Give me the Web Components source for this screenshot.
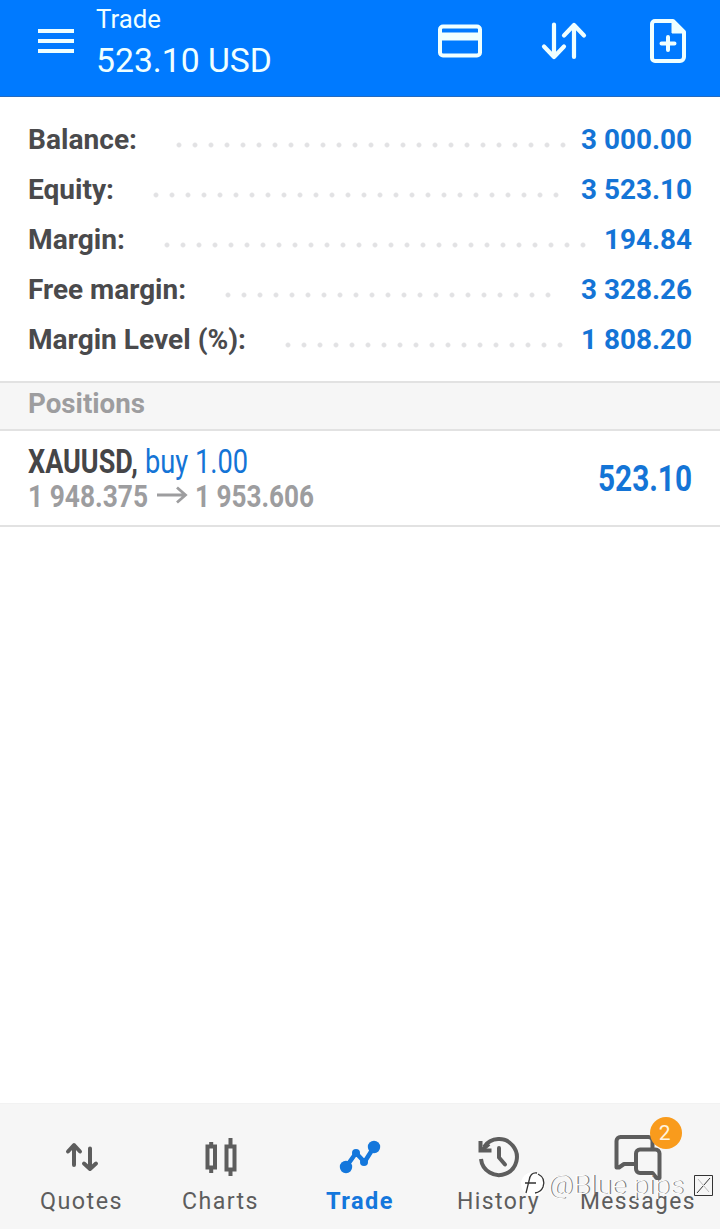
<!DOCTYPE html>
<html lang="en">
<head>
    <meta charset="UTF-8">
    <meta name="viewport" content="width=device-width, initial-scale=1.0">
    <title>Trade</title>
    <style>
        html, body { margin: 0; height: 100%; }
        body { background: #fff; overflow: hidden; font-family: Roboto, "Liberation Sans", sans-serif; }
    </style>
</head>
<body>
    <trade-app></trade-app>

    <script>
        function define(name, html, setup) {
            customElements.define(name, class extends HTMLElement {
                connectedCallback() {
                    if (this.shadowRoot) return;
                    const root = this.attachShadow({ mode: "open" });
                    root.innerHTML = html;
                    if (setup) setup(this, root);
                }
            });
        }

        // text squeezed or stretched to a given width
        define("fit-text", `
            <style>
                :host { display: inline-block; vertical-align: top; }
                span { display: inline-block; white-space: pre; vertical-align: top; transform-origin: 0 50%; }
            </style>
            <span><slot></slot></span>
        `, (host, root) => {
            const span = root.querySelector("span");
            const width = Number(host.getAttribute("width"));
            const scale = width / span.getBoundingClientRect().width;
            host.style.width = width + "px";
            span.style.transform = "scaleX(" + scale + ")";
        });

        const icons = {
            menu: `<svg width="36" height="26" viewBox="0 0 36 26"><path d="M0 3h36M0 13h36M0 23h36" stroke-width="4"/></svg>`,
            card: `<svg width="44" height="34" viewBox="0 0 44 34"><rect x="2" y="2.5" width="40" height="29" rx="3" stroke-width="4"/><path d="M3 12.5h38" stroke-width="8"/></svg>`,
            sort: `<svg width="46" height="38" viewBox="0 0 46 38" stroke-linecap="round" stroke-linejoin="round"><path d="M13 2.500v32.500M3 24.500l10 10.500 10-10.500M33 35V3M23 13.500L33 3l10 10.500" stroke-width="4.200"/></svg>`,
            add: `<svg width="36" height="44" viewBox="0 0 36 44" stroke-linejoin="round" stroke-linecap="round"><path d="M5 2h18l11 11v25a4 4 0 0 1-4 4H5a3 3 0 0 1-3-3V5a3 3 0 0 1 3-3z" stroke-width="4"/><path d="M22 2v12h12z" fill="currentColor" stroke-width="1"/><path d="M18 18v13M11.500 24.500h13" stroke-width="4"/></svg>`,
            quotes: `<svg width="34" height="30" viewBox="0 0 34 30" stroke-linecap="round" stroke-linejoin="round"><path d="M9 23V3.500M3 9.500l6-6.500 6 6.500M25 6.500V27M19 21.500l6 5.500 6-5.500" stroke-width="4"/></svg>`,
            charts: `<svg width="32" height="38" viewBox="0 0 32 38"><path d="M2.500 8.500h7.500v21h-7.500zM21.500 8.500h8v23h-8zM6.200 4v5M6.200 29v6M25.500 0v9M25.500 31v7" stroke-width="4"/></svg>`,
            trade: `<svg width="42" height="34" viewBox="0 0 42 34" stroke-linecap="round"><path d="M7 27L17 13l8.500 9L35 7" stroke-width="4.500" stroke-linejoin="round"/><g fill="currentColor" stroke="none"><circle cx="7" cy="27" r="6.200"/><circle cx="17" cy="13" r="4"/><circle cx="25" cy="22" r="4"/><circle cx="35" cy="7" r="6.200"/></g></svg>`,
            history: `<svg width="42" height="42" viewBox="0 0 42 42"><path d="M3 23a18 18 0 1 0 3-12" stroke-width="4"/><path d="M2.500 5v9.500h11" stroke-width="4"/><path d="M4 14l7-6" stroke-width="4"/><path d="M21 12v9.500l6 7" stroke-width="4" stroke-linecap="round" stroke-linejoin="round"/></svg>`,
            messages: `<svg width="50" height="46" viewBox="0 0 50 46" stroke-linejoin="round"><path d="M21 30H11l-5 3.500H3.500V7a4 4 0 0 1 4-4h28a4 4 0 0 1 4 4v7" stroke-width="4"/><path d="M27 15.500h15.500a4 4 0 0 1 4 4V44h-3l-4-5H27a4 4 0 0 1-4-4V19.500a4 4 0 0 1 4-4z" stroke-width="4"/></svg>`,
            arrow: `<svg width="31" height="18" viewBox="0 0 31 18"><path d="M0 9h28M20 1.500l8.500 7.500-8.500 7.500" stroke-width="2.800"/></svg>`
        };

        define("app-icon", `
            <style>
                :host { display: block; line-height: 0; }
                svg { display: block; fill: none; stroke: currentColor; }
            </style>
        `, (host, root) => {
            root.innerHTML += icons[host.getAttribute("name")];
        });

        define("top-bar", `
            <style>
                :host { display: flex; box-sizing: border-box; height: 97px; padding: 0 34px 0 38px;
                    background: #007aff; color: #efffff; border-bottom: 1px solid #246bc0; }
                .menu { margin-top: 28px; }
                .title { flex: 1; margin-left: 22px; padding-top: 5px; }
                .name { height: 30px; font-size: 25px; line-height: 30px; }
                .sum { height: 40px; margin-top: 5px; font-size: 34px; line-height: 40px; }
                .tools { display: flex; align-items: center; height: 82px; }
                .sort { margin: 0 63px 0 59px; }
            </style>
            <app-icon class="menu" name="menu"></app-icon>
            <div class="title">
                <div class="name"><fit-text width="65">Trade</fit-text></div>
                <div class="sum"><fit-text width="176">523.10 USD</fit-text></div>
            </div>
            <div class="tools">
                <app-icon name="card"></app-icon>
                <app-icon class="sort" name="sort"></app-icon>
                <app-icon name="add"></app-icon>
            </div>
        `);

        define("account-row", `
            <style>
                :host { display: flex; height: 50px; font-size: 28px; font-weight: 700; line-height: 50px; color: #4a4a4c; }
                .dots { height: 6px; margin-top: 27px;
                    background: radial-gradient(circle at 3px 3px, #e2e2e4 1.8px, transparent 3px) 0 0 / 16px 6px; }
                .value { margin-left: auto; color: #1474d6; }
            </style>
            <slot name="label"></slot>
            <div class="dots"></div>
            <div class="value"><slot></slot></div>
        `, (host, root) => {
            const dots = root.querySelector(".dots");
            dots.style.marginLeft = host.getAttribute("gap") + "px";
            dots.style.width = host.getAttribute("dots") * 16 - 10 + "px";
        });

        define("account-summary", `
            <style>
                :host { display: block; box-sizing: border-box; height: 284px; padding: 18px 28px 0; }
            </style>
            <account-row gap="39" dots="25"><fit-text slot="label" width="109">Balance:</fit-text><fit-text width="111">3 000.00</fit-text></account-row>
            <account-row gap="39" dots="26"><fit-text slot="label" width="86">Equity:</fit-text><fit-text width="111">3 523.10</fit-text></account-row>
            <account-row gap="39" dots="27"><fit-text slot="label" width="97">Margin:</fit-text><fit-text width="88">194.84</fit-text></account-row>
            <account-row gap="39" dots="21"><fit-text slot="label" width="158">Free margin:</fit-text><fit-text width="111">3 328.26</fit-text></account-row>
            <account-row gap="39" dots="18"><fit-text slot="label" width="218">Margin Level (%):</fit-text><fit-text width="111">1 808.20</fit-text></account-row>
        `);

        define("section-title", `
            <style>
                :host { display: block; box-sizing: border-box; height: 50px; padding-left: 28px; background: #f6f6f6;
                    border: solid #e2e2e2; border-width: 2px 0; font-size: 28px; font-weight: 700; line-height: 42px; color: #9d9d9f; }
            </style>
            <slot></slot>
        `);

        define("position-row", `
            <style>
                :host { display: flex; justify-content: space-between; box-sizing: border-box; height: 96px;
                    padding: 12px 28px 0; border-bottom: 2px solid #e2e2e2; }
                .head { display: flex; height: 38px; font-size: 33px; line-height: 38px; }
                .symbol { font-weight: 700; color: #454547; }
                .side { margin-left: 7px; color: #1474d6; }
                .prices { display: flex; height: 32px; font-size: 31px; font-weight: 700; line-height: 32px; color: #9d9d9f; }
                .prices app-icon { margin: 5px 7px 0 9px; }
                .profit { margin-top: 14px; font-size: 37px; font-weight: 700; line-height: 44px; color: #1474d6; }
            </style>
            <div>
                <div class="head">
                    <fit-text class="symbol" width="110">XAUUSD,</fit-text>
                    <fit-text class="side" width="103">buy 1.00</fit-text>
                </div>
                <div class="prices">
                    <fit-text width="120">1 948.375</fit-text>
                    <app-icon name="arrow"></app-icon>
                    <fit-text width="119">1 953.606</fit-text>
                </div>
            </div>
            <fit-text class="profit" width="94">523.10</fit-text>
        `);

        define("nav-item", `
            <style>
                :host { display: flex; flex-direction: column; align-items: center; position: relative; color: #5d5d5d; }
                :host([active]) { color: #1477dc; font-weight: 700; }
                .icon { display: flex; align-items: center; height: 46px; margin-top: 30px; }
                .label { height: 30px; margin-top: 6px; font-size: 24px; line-height: 30px; letter-spacing: 1.500px; }
                .badge { position: absolute; top: 13px; left: 50%; margin-left: 12px; width: 32px; height: 32px;
                    border-radius: 50%; background: #f99b1c; color: #fff3df; font-size: 21px; line-height: 32px; text-align: center; }
                .badge:empty { display: none; }
            </style>
            <div class="icon"></div>
            <div class="label"><slot></slot></div>
            <div class="badge"></div>
        `, (host, root) => {
            root.querySelector(".icon").innerHTML = `<app-icon name="${host.getAttribute("icon")}"></app-icon>`;
            root.querySelector(".badge").textContent = host.getAttribute("badge") || "";
        });

        define("bottom-nav", `
            <style>
                :host { display: grid; grid-template-columns: repeat(5, 139px); box-sizing: border-box;
                    height: 126px; padding-left: 12px; background: #f6f6f6; border-top: 1px solid #f2f2f2;
                    font-size: 24px; letter-spacing: 1.500px; }
            </style>
            <nav-item icon="quotes"><fit-text width="83">Quotes</fit-text></nav-item>
            <nav-item icon="charts"><fit-text width="77">Charts</fit-text></nav-item>
            <nav-item icon="trade" active><fit-text width="68">Trade</fit-text></nav-item>
            <nav-item icon="history"><fit-text width="83">History</fit-text></nav-item>
            <nav-item icon="messages" badge="2"><fit-text width="116">Messages</fit-text></nav-item>
        `);

        define("water-mark", `
            <style>
                :host { position: absolute; right: 7px; bottom: 28px; display: flex; align-items: center; height: 32px;
                    font-size: 26px; font-weight: 300; line-height: 32px; color: #fcfcfc; text-shadow: 1px 0 0 #777; }
                svg { display: block; }
                .box { margin-left: 10px; }
            </style>
            <svg width="28" height="32" viewBox="0 0 28 32">
                <circle cx="13" cy="15" r="12" fill="#fff"/>
                <path d="M17 4q-7-1-8 8l-3 12M5 14h11M18 5q8 4 5 13-2 5-8 6" fill="none" stroke="#333" stroke-width="1.300"/>
            </svg>
            <fit-text width="136">@Blue pips</fit-text>
            <svg class="box" width="19" height="21" viewBox="0 0 19 21" fill="none">
                <path d="M.500.500h18v20H.500zM3 18L16 3" stroke="#333"/>
                <path d="M4 4l11 13" stroke="#bbb"/>
            </svg>
        `);

        define("trade-app", `
            <style>
                :host { display: flex; flex-direction: column; position: relative; width: 720px; height: 1229px; overflow: hidden; }
                main { flex: 1; }
            </style>
            <top-bar></top-bar>
            <main>
                <account-summary></account-summary>
                <section-title><fit-text width="117">Positions</fit-text></section-title>
                <position-row></position-row>
            </main>
            <bottom-nav></bottom-nav>
            <water-mark></water-mark>
        `);
    </script>
</body>
</html>
